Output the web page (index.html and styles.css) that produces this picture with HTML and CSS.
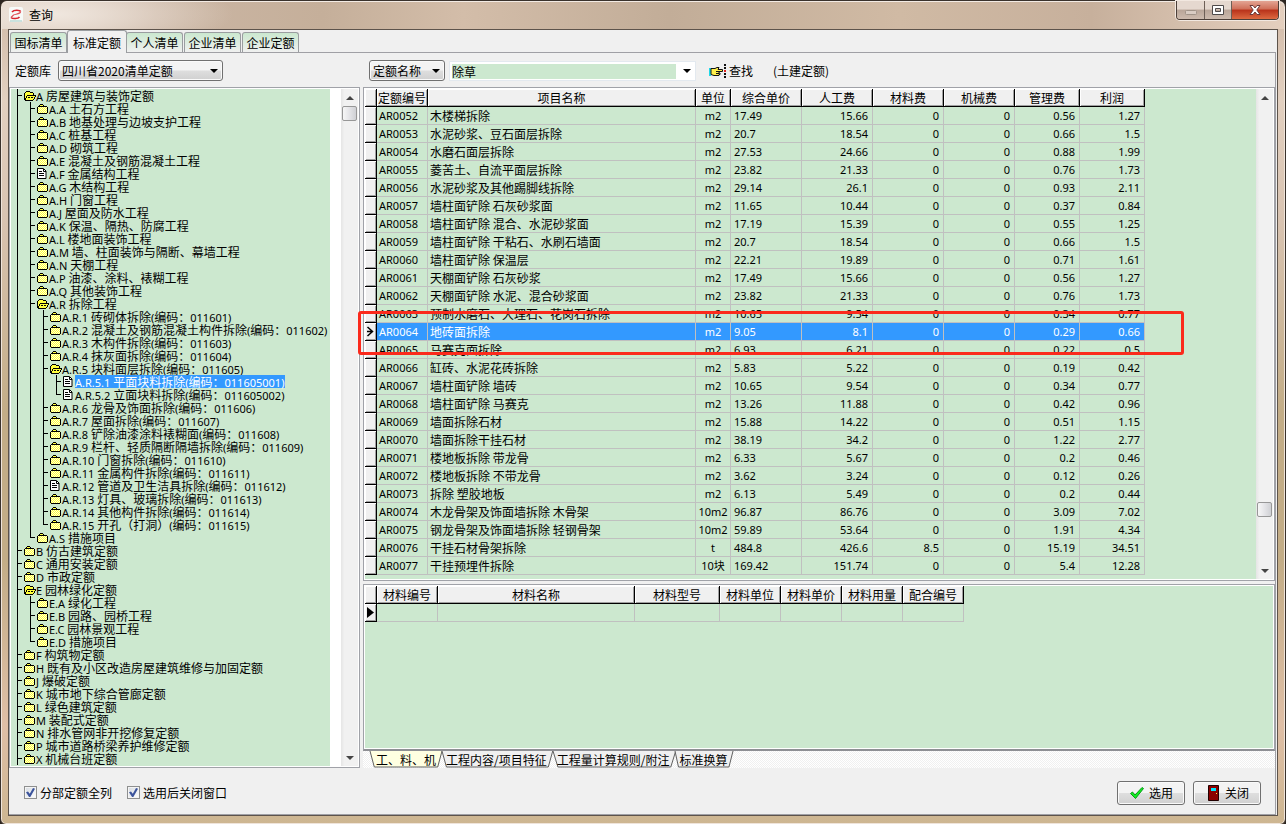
FILE: index.html
```html
<!DOCTYPE html>
<html lang="zh-CN">
<head>
<meta charset="utf-8">
<title>查询</title>
<link rel="stylesheet" href="styles.css">
</head>
<body>
<div class="window">
  <header class="titlebar">
    <svg class="app-icon" viewBox="0 0 16 16" aria-hidden="true">
      <rect x="1" y="0" width="14" height="15" rx="2" fill="#f7faf8"/>
      <path d="M2 14h12" stroke="#9fcac4"/>
      <path d="M4 5c2-2.500 8-2 8.500-.5M3 10.500c1.500 1.500 7 1.500 8.500-.5" fill="none" stroke="#d8232f" stroke-width="1.600"/>
      <path d="M12.500 4.500C13 7 8 7 5.500 8L3 10.500" fill="none" stroke="#e0525a" stroke-width="1.200"/>
    </svg>
    <h1 class="title">查询</h1>
    <div class="window-buttons">
      <button class="wb" type="button" aria-label="最小化"><svg viewBox="0 0 14 12"><rect x="1.500" y="6.500" width="11" height="4" rx="1" fill="#d9ccc3" stroke="#a09388"/></svg></button>
      <button class="wb wb-max" type="button" aria-label="最大化"><svg viewBox="0 0 14 12"><path d="M1.500 1.500h11v9h-11zM4.500 4.500v3h5v-3z" fill="#fff" fill-rule="evenodd" stroke="#4e4a4a"/></svg></button>
      <button class="wb wb-close" type="button" aria-label="关闭窗口"><svg viewBox="0 0 14 12"><path d="M2 1.500h3L7 4l2-2.500h3L8.800 6l3.200 4.500H9L7 8l-2 2.500H2L5.200 6z" fill="#fff" stroke="#6b3a3a"/></svg></button>
    </div>
  </header>

  <main class="client">
    <nav class="tabs">
      <button class="tab" type="button">国标清单</button>
      <button class="tab tab-active" type="button">标准定额</button>
      <button class="tab" type="button">个人清单</button>
      <button class="tab" type="button">企业清单</button>
      <button class="tab" type="button">企业定额</button>
    </nav>

    <div class="page">
      <div class="toolbar">
        <div class="tool-left">
          <label for="lib">定额库</label>
          <span class="combo combo-lib"><select id="lib"><option>四川省2020清单定额</option></select></span>
        </div>
        <div class="tool-right">
          <span class="combo combo-field"><select aria-label="查询字段"><option>定额名称</option></select></span>
          <span class="search"><input type="text" value="除草" aria-label="关键字"><button type="button" aria-label="历史"></button></span>
          <button class="find" type="button">
            <svg viewBox="0 0 20 14" aria-hidden="true">
              <path d="M0 4h2v8H0z" fill="#1fd8e8"/>
              <path d="M2 4.500h4l2-1h2l-1 2h4.500v2H10v1.500h1v1.500h-1v1H5l-3-1z" fill="#fff04a" stroke="#111"/>
              <path d="M7 7.500h3M7 9.500h3" stroke="#111"/>
              <path d="M15 0h2v2h-2zM15 3h2v2h-2zM15 9h2v2h-2zM15 12h2v2h-2z" fill="#111"/><path d="M15 6h2v2h-2z" fill="#e02020"/>
            </svg>查找</button>
          <span class="kind">(土建定额)</span>
        </div>
      </div>

      <div class="split">
        <section class="tree-panel">
          <ul class="tree" id="tree"></ul>
          <div class="scroll"><i class="up"></i><i class="thumb thumb-top"></i><i class="down"></i></div>
        </section>

        <div class="right">
          <section class="grid-panel">
            <div class="grid-area">
              <table class="grid">
                <colgroup><col class="w12"><col class="w51"><col class="w268"><col class="w35"><col class="w71"><col class="w71"><col class="w71"><col class="w71"><col class="w65"><col class="w65"></colgroup>
                <thead><tr><th></th><th>定额编号</th><th>项目名称</th><th>单位</th><th>综合单价</th><th>人工费</th><th>材料费</th><th>机械费</th><th>管理费</th><th>利润</th></tr></thead>
                <tbody id="rows"></tbody>
              </table>
            </div>
            <div class="scroll"><i class="up"></i><i class="thumb thumb-low"></i><i class="down"></i></div>
            <div class="callout"></div>
          </section>

          <section class="detail-panel">
            <table class="grid">
              <colgroup><col class="w12"><col class="w61"><col class="w197"><col class="w85"><col class="w61"><col class="w61"><col class="w61"><col class="w61"></colgroup>
              <thead><tr><th></th><th>材料编号</th><th>材料名称</th><th>材料型号</th><th>材料单位</th><th>材料单价</th><th>材料用量</th><th>配合编号</th></tr></thead>
              <tbody><tr><th><svg class="marker" viewBox="0 0 9 11"><path d="M1 0l7 5.500L1 11z"/></svg></th><td></td><td></td><td></td><td></td><td></td><td></td><td></td></tr></tbody>
            </table>
          </section>

          <nav class="sheet-tabs">
            <button class="sheet sheet-active" type="button"><svg viewBox="0 0 100 17" preserveAspectRatio="none"><path d="M0 0L6 16H94L100 0"/></svg><span>工、料、机</span></button>
            <button class="sheet" type="button"><svg viewBox="0 0 100 17" preserveAspectRatio="none"><path d="M0 0L4 16H96L100 0"/></svg><span>工程内容/项目特征</span></button>
            <button class="sheet" type="button"><svg viewBox="0 0 100 17" preserveAspectRatio="none"><path d="M0 0L4 16H96L100 0"/></svg><span>工程量计算规则/附注</span></button>
            <button class="sheet" type="button"><svg viewBox="0 0 100 17" preserveAspectRatio="none"><path d="M0 0L6 16H93L100 0"/></svg><span>标准换算</span></button>
          </nav>
        </div>
      </div>

      <footer class="footer">
        <label class="check"><input type="checkbox" checked>分部定额全列</label>
        <label class="check"><input type="checkbox" checked>选用后关闭窗口</label>
        <div class="actions">
          <button class="btn" type="button"><svg viewBox="0 0 16 16" aria-hidden="true"><path d="M1.500 8.500l2-1.500L6 10l7-7.500 1.500 1L6.500 13.500z" fill="#10ee20" stroke="#0a9a18"/></svg>选用</button>
          <button class="btn" type="button"><svg viewBox="0 0 16 16" aria-hidden="true"><path d="M3.500.500h10v15h-10z" fill="#8a0000" stroke="#200"/><path d="M6 3h5v3H6z" fill="#00e8ff"/><path d="M11 8h1v1h-1z" fill="#ffe34a"/></svg>关闭</button>
        </div>
      </footer>
    </div>
  </main>
</div>
<script src="app.js"></script>
</body>
</html>
```
FILE: styles.css
```css
* { box-sizing: border-box; }
body {
  margin: 0;
  font: 12px/13px "Noto Sans CJK SC", "Noto Sans", sans-serif;
  color: #000;
  background: #2c2520;
}
button, input, select { font: inherit; color: inherit; margin: 0; padding: 0; }
ul { margin: 0; padding: 0; list-style: none; }
.latin { font: 11px/13px "Noto Sans", sans-serif; }

.window {
  min-height: 100vh;
  display: flex;
  flex-direction: column;
  padding: 0 7px 8px;
  border: 1px solid #3a322c;
  border-radius: 7px 7px 6px 6px;
  box-shadow: inset 0 0 0 1px #efe4da;
  background: linear-gradient(#ceb9a6 0, #d5bfad 3%, #e2d0c0 12%, #d9c4b2 26%, #c3ad87 50%, #c3ad87 68%, #dfbfa6 88%, #cdb691 100%);
}
.titlebar {
  display: flex;
  align-items: flex-start;
  height: 28px;
  margin: 0 -6px;
  padding: 0 0 0 6px;
  border-radius: 6px 6px 0 0;
  background:
    radial-gradient(ellipse 180px 40px at 4% 45%, #f0e7df, #f0e7df00),
    linear-gradient(90deg, #dccbbd 0, #cbb6a4 12%, #c5af9a 25%, #d3bda9 36%, #c2ad98 52%, #d0baa4 70%, #c7b09c 85%, #e4cfbe 100%);
  border-top: 1px solid #f3ebe4;
}
.app-icon { width: 16px; height: 16px; margin-top: 5px; }
.title { margin: 5px 0 0 5px; font-size: 12px; line-height: 15px; font-weight: 400; }
.window-buttons {
  display: flex;
  margin: -1px 5px 0 auto;
  border: 1px solid #4c3f38;
  border-top: 0;
  border-radius: 0 0 4px 4px;
  overflow: hidden;
  box-shadow: 0 0 0 1px #f2e8e0;
}
.wb {
  width: 28px; height: 18px;
  display: grid; place-items: center;
  border: 0; border-right: 1px solid #6d5f56;
  background: linear-gradient(#e5d8cf 0 45%, #b9a598 50%, #cdbbae);
}
.wb svg { width: 14px; height: 12px; }
.wb-max { width: 27px; }
.wb-close { width: 46px; border-right: 0; background: linear-gradient(#e3a493 0, #cf6f58 45%, #b8321a 50%, #dd6a41); }

.client {
  flex: 1;
  display: flex;
  flex-direction: column;
  background: #f0f0f0;
  border: 1px solid #5d534b;
  padding: 0 1px 0 0;
}
.tabs { display: flex; align-items: flex-end; height: 22px; padding-left: 1px; }
.tab {
  height: 20px; width: 57px;
  margin-right: 1px;
  border: 1px solid #9a9da0; border-bottom: 0;
  border-radius: 3px 3px 0 0;
  background: linear-gradient(#cbe8cf, #f0f0f0);
  white-space: nowrap;
}
.tab-active {
  width: 60px; height: 23px;
  margin: 0 -1px -1px -1px;
  background: #f0f0f0;
  position: relative;
}
.page {
  flex: 1;
  display: flex;
  flex-direction: column;
  border: 1px solid #a0a0a5;
  border-width: 1px 1px 1px 0;
}
.toolbar { display: flex; height: 34px; align-items: center; }
.tool-left { display: flex; align-items: center; gap: 7px; width: 354px; padding: 1px 0 0 6px; }
.tool-right { display: flex; align-items: center; padding: 1px 0 0 6px; }
.combo { position: relative; display: flex; }
.combo select {
  appearance: none;
  width: 100%; height: 21px;
  padding: 0 3px;
  border: 1px solid #707070; border-radius: 3px;
  background: linear-gradient(#f3f3f3 0 48%, #dedede 52%, #d0d0d0);
  box-shadow: inset 0 0 0 1px #fafafa;
}
.combo::after, .search button::after {
  content: "";
  position: absolute;
  right: 5px; top: 9px;
  border: 4px solid transparent;
  border-top-color: #000; border-bottom: 0;
}
.combo-lib { width: 165px; }
.combo-field { width: 76px; }
.search {
  display: flex;
  width: 247px; height: 20px;
  margin-left: 4px;
  padding: 2px 0 2px 2px;
  background: #fff;
  border: 1px solid #e3e9ef;
}
.search input { flex: 1; min-width: 0; border: 0; background: #cce8cf; outline: 0; height: 15px; }
.search button { position: relative; width: 19px; border: 0; background: none; }
.search button::after { right: 4px; top: 5px; }
.find { display: flex; align-items: center; border: 0; background: none; margin-left: 13px; }
.find svg { width: 20px; height: 14px; }
.kind { margin-left: 20px; }

.split { display: flex; flex: 1; gap: 3px; }
.tree-panel, .grid-panel, .detail-panel {
  border: 1px solid #a0a2a8;
  box-shadow: inset 0 0 0 1px #fff;
  padding: 1px;
  display: flex;
}
.tree-panel { width: 351px; background: #fff; }
.tree { width: 319px; background: #cce8cf; padding-bottom: 1px; }
.tree li { display: flex; height: 13px; white-space: pre; }
.guide { width: 13px; flex: none; background: linear-gradient(#000, #000) 6px 0 / 1px 100% no-repeat; }
.guide-leaf {
  background:
    linear-gradient(#000, #000) 6px 0 / 1px 100% no-repeat,
    linear-gradient(#000, #000) 6px 6px / 5px 1px no-repeat;
}
.guide-last { background-size: 1px 7px, 5px 1px; }
.node-icon { width: 12px; height: 13px; flex: none; }
.node-text { padding-right: 1px; height: 13px; }
.node-selected { background: #39f; color: #fff; }

.scroll {
  display: flex;
  flex-direction: column;
  align-items: center;
  width: 17px;
  margin-left: auto;
  background: linear-gradient(90deg, #e5e5e5, #f1f1f1 20%, #f1f1f1);
}
.scroll i { flex: none; }
.up, .down { width: 0; height: 0; border: 4px solid transparent; }
.up { border-bottom-color: #444; border-top: 0; margin: 7px 0 6px; }
.down { border-top-color: #444; border-bottom: 0; margin: auto 0 6px; }
.thumb {
  width: 15px; height: 15px;
  border: 1px solid #979797; border-radius: 2px;
  background: linear-gradient(90deg, #f7f7f7, #e6e6e9 45%, #cfd0d4);
}
.thumb-low { margin-top: 396px; }

.right { flex: 1; min-width: 0; display: flex; flex-direction: column; }
.grid-panel { position: relative; background: #cce8cf; }
.grid-area { flex: 1; padding-bottom: 4px; }
.detail-panel { flex: 1; margin-top: 3px; background: #cce8cf; align-items: flex-start; border-bottom: 2px solid #8e8f94; }
.grid { table-layout: fixed; width: 0; border-collapse: separate; border-spacing: 0; }
.grid th, .grid td { height: 18px; padding: 0 2px; line-height: 17px; white-space: nowrap; overflow: hidden; }
.grid th {
  padding: 0;
  font-weight: 400;
  background: #f0f0f0;
  border-right: 1px solid #000;
  border-bottom: 1px solid #000;
  box-shadow: inset 1px 1px #fff, inset -1px -1px #a0a0a0;
}
.grid td { border-right: 1px solid #c0c0c0; border-bottom: 1px solid #c0c0c0; }
.grid .num { font: 11px/17px "Noto Sans", sans-serif; text-align: right; padding-right: 4px; }
.grid .code { font: 11px/17px "Noto Sans", sans-serif; }
.grid .price { font: 11px/17px "Noto Sans", sans-serif; padding-left: 3px; }
.grid .unit { font: 11px/17px "Noto Sans", "Noto Sans CJK SC", sans-serif; text-align: center; padding: 0; }
.grid .current td { background: #39f; color: #fff; }
.marker { display: block; width: 9px; height: 11px; margin: 0 auto; }
.w12 { width: 12px; } .w35 { width: 35px; } .w51 { width: 51px; } .w61 { width: 61px; }
.w65 { width: 65px; } .w71 { width: 71px; } .w85 { width: 85px; } .w197 { width: 197px; } .w268 { width: 268px; }
.callout {
  position: absolute;
  left: -6px; top: 223px;
  width: 826px; height: 44px;
  border: 3px solid #fb2a1c;
  border-radius: 3px;
  pointer-events: none;
}

.sheet-tabs {
  display: flex;
  height: 17px;
  padding-left: 7px;
  background: repeating-conic-gradient(#fff 0 25%, #f0f0f0 0 50%) 0 0 / 2px 2px;
}
.sheet { position: relative; border: 0; background: none; padding: 0 6px 0 4px; white-space: nowrap; }
.sheet span { position: relative; }
.sheet svg { position: absolute; inset: 0; width: 100%; height: 100%; overflow: visible; }
.sheet path { fill: #f0f0f0; stroke: #606060; vector-effect: non-scaling-stroke; }
.sheet-active { padding: 0 6px; }
.sheet-active path { fill: #ffffe1; }

.footer { display: flex; align-items: center; gap: 15px; height: 46px; padding: 3px 14px 0 15px; }
.check { display: flex; align-items: center; gap: 3px; }
.check input {
  appearance: none;
  width: 13px; height: 13px;
  border: 1px solid #8e8f8f;
  background: linear-gradient(135deg, #d5dae0, #fff);
  box-shadow: inset 0 0 0 1px #f4f4f4;
}
.check input:checked::after {
  content: "";
  display: block;
  width: 9px; height: 9px;
  margin: 1px;
  background: #3c549c;
  clip-path: polygon(0 48%, 22% 40%, 42% 65%, 78% 0, 100% 8%, 48% 100%, 34% 100%);
}
.actions { display: flex; gap: 8px; margin-left: auto; }
.btn {
  display: flex; align-items: center; justify-content: center; gap: 4px;
  width: 68px; height: 24px;
  border: 1px solid #707070; border-radius: 3px;
  background: linear-gradient(#f3f3f3 0 48%, #dedede 52%, #d0d0d0);
  box-shadow: inset 0 0 0 1px #fafafa;
}
.btn svg { width: 16px; height: 16px; }
```
FILE: app.js
```js
// Each entry: level, icon (f folder, o open folder, d document), label, optional "last" flag.
const nodes = [
  [0, "o", "A 房屋建筑与装饰定额"],
  [1, "f", "A.A 土石方工程"],
  [1, "f", "A.B 地基处理与边坡支护工程"],
  [1, "f", "A.C 桩基工程"],
  [1, "f", "A.D 砌筑工程"],
  [1, "f", "A.E 混凝土及钢筋混凝土工程"],
  [1, "d", "A.F 金属结构工程"],
  [1, "f", "A.G 木结构工程"],
  [1, "f", "A.H 门窗工程"],
  [1, "f", "A.J 屋面及防水工程"],
  [1, "f", "A.K 保温、隔热、防腐工程"],
  [1, "f", "A.L 楼地面装饰工程"],
  [1, "f", "A.M 墙、柱面装饰与隔断、幕墙工程"],
  [1, "f", "A.N 天棚工程"],
  [1, "f", "A.P 油漆、涂料、裱糊工程"],
  [1, "f", "A.Q 其他装饰工程"],
  [1, "o", "A.R 拆除工程"],
  [2, "f", "A.R.1 砖砌体拆除(编码：011601)"],
  [2, "f", "A.R.2 混凝土及钢筋混凝土构件拆除(编码：011602)"],
  [2, "f", "A.R.3 木构件拆除(编码：011603)"],
  [2, "f", "A.R.4 抹灰面拆除(编码：011604)"],
  [2, "o", "A.R.5 块料面层拆除(编码：011605)"],
  [3, "d", "A.R.5.1 平面块料拆除(编码：011605001)", "selected"],
  [3, "d", "A.R.5.2 立面块料拆除(编码：011605002)", "last"],
  [2, "f", "A.R.6 龙骨及饰面拆除(编码：011606)"],
  [2, "f", "A.R.7 屋面拆除(编码：011607)"],
  [2, "f", "A.R.8 铲除油漆涂料裱糊面(编码：011608)"],
  [2, "f", "A.R.9 栏杆、轻质隔断隔墙拆除(编码：011609)"],
  [2, "f", "A.R.10 门窗拆除(编码：011610)"],
  [2, "f", "A.R.11 金属构件拆除(编码：011611)"],
  [2, "d", "A.R.12 管道及卫生洁具拆除(编码：011612)"],
  [2, "f", "A.R.13 灯具、玻璃拆除(编码：011613)"],
  [2, "f", "A.R.14 其他构件拆除(编码：011614)"],
  [2, "f", "A.R.15 开孔（打洞）(编码：011615)", "last"],
  [1, "f", "A.S 措施项目", "last"],
  [0, "f", "B 仿古建筑定额"],
  [0, "f", "C 通用安装定额"],
  [0, "f", "D 市政定额"],
  [0, "o", "E 园林绿化定额"],
  [1, "f", "E.A 绿化工程"],
  [1, "f", "E.B 园路、园桥工程"],
  [1, "f", "E.C 园林景观工程"],
  [1, "f", "E.D 措施项目", "last"],
  [0, "f", "F 构筑物定额"],
  [0, "f", "H 既有及小区改造房屋建筑维修与加固定额"],
  [0, "f", "J 爆破定额"],
  [0, "f", "K 城市地下综合管廊定额"],
  [0, "f", "L 绿色建筑定额"],
  [0, "f", "M 装配式定额"],
  [0, "f", "N 排水管网非开挖修复定额"],
  [0, "f", "P 城市道路桥梁养护维修定额"],
  [0, "f", "X 机械台班定额"]
];

const icons = {
  f: '<path d="M.5 4.500H10.500V11.500H.5z" fill="#ffff3c"/><path d="M1 5.500h9M1 7.500h9M1 9.500h9" stroke="#fff" stroke-opacity=".8" stroke-dasharray="1 1"/><path d="M2 6.500h9M2 8.500h9M2 10.500h9" stroke="#fff" stroke-opacity=".8" stroke-dasharray="1 1"/><path d="M2 4V3H3V2H6V3H7V4" fill="#ffff3c"/><path d="M.5 5v6M1 11.500h9M10.500 5v6M1 4.500h1M7 4.500h3M2.500 3v1M3 2.500h3M6.500 3v1M2 4.500h5" fill="none" stroke="#000"/>',
  o: '<path d="M.5 10V4.500l2-2h3l1 1.500h2.500v2.500h2.500l-2 5H1.500z" fill="#ffff3c"/><path d="M.5 4v7M1 3.500h1M2 2.500h4M6 3.500h3M9.500 4v2M3 6.500h9M2.500 7v2M1.500 9v2M1 11.500h8M9.500 10v1M10.500 8v2M11.500 6v2M4 8.500h2M7 8.500h2" fill="none" stroke="#000"/>',
  d: '<path d="M.5 1.500h6l2.500 2.500v7.500H.5z" fill="#fff" stroke="#000"/><path d="M2 4.500h3M2 6.500h5M2 8.500h5M6.500 2v2.500H9" fill="none" stroke="#000"/>'
};

document.getElementById("tree").innerHTML = nodes.map(([level, icon, label, flag]) => {
  const text = label.replace(/[ -~]+/g, '<span class="latin">$&</span>');
  return "<li>" + '<i class="guide"></i>'.repeat(level) +
    `<i class="guide guide-leaf${flag === "last" ? " guide-last" : ""}"></i>` +
    `<svg class="node-icon" viewBox="0 0 12 13">${icons[icon]}</svg>` +
    `<span class="node-text${flag === "selected" ? " node-selected" : ""}">${text}</span></li>`;
}).join("");

// code | name | unit | price | labour | material | machine | overhead | profit
const rows = `AR0052|木楼梯拆除|m2|17.49|15.66|0|0|0.56|1.27
AR0053|水泥砂浆、豆石面层拆除|m2|20.7|18.54|0|0|0.66|1.5
AR0054|水磨石面层拆除|m2|27.53|24.66|0|0|0.88|1.99
AR0055|菱苦土、自流平面层拆除|m2|23.82|21.33|0|0|0.76|1.73
AR0056|水泥砂浆及其他踢脚线拆除|m2|29.14|26.1|0|0|0.93|2.11
AR0057|墙柱面铲除 石灰砂浆面|m2|11.65|10.44|0|0|0.37|0.84
AR0058|墙柱面铲除 混合、水泥砂浆面|m2|17.19|15.39|0|0|0.55|1.25
AR0059|墙柱面铲除 干粘石、水刷石墙面|m2|20.7|18.54|0|0|0.66|1.5
AR0060|墙柱面铲除 保温层|m2|22.21|19.89|0|0|0.71|1.61
AR0061|天棚面铲除 石灰砂浆|m2|17.49|15.66|0|0|0.56|1.27
AR0062|天棚面铲除 水泥、混合砂浆面|m2|23.82|21.33|0|0|0.76|1.73
AR0063|预制水磨石、大理石、花岗石拆除|m2|10.65|9.54|0|0|0.34|0.77
AR0064|地砖面拆除|m2|9.05|8.1|0|0|0.29|0.66
AR0065|马赛克面拆除|m2|6.93|6.21|0|0|0.22|0.5
AR0066|缸砖、水泥花砖拆除|m2|5.83|5.22|0|0|0.19|0.42
AR0067|墙柱面铲除 墙砖|m2|10.65|9.54|0|0|0.34|0.77
AR0068|墙柱面铲除 马赛克|m2|13.26|11.88|0|0|0.42|0.96
AR0069|墙面拆除石材|m2|15.88|14.22|0|0|0.51|1.15
AR0070|墙面拆除干挂石材|m2|38.19|34.2|0|0|1.22|2.77
AR0071|楼地板拆除 带龙骨|m2|6.33|5.67|0|0|0.2|0.46
AR0072|楼地板拆除 不带龙骨|m2|3.62|3.24|0|0|0.12|0.26
AR0073|拆除 塑胶地板|m2|6.13|5.49|0|0|0.2|0.44
AR0074|木龙骨架及饰面墙拆除 木骨架|10m2|96.87|86.76|0|0|3.09|7.02
AR0075|钢龙骨架及饰面墙拆除 轻钢骨架|10m2|59.89|53.64|0|0|1.91|4.34
AR0076|干挂石材骨架拆除|t|484.8|426.6|8.5|0|15.19|34.51
AR0077|干挂预埋件拆除|10块|169.42|151.74|0|0|5.4|12.28`.split("\n");

const cellClass = ["code", "name", "unit", "price", "num", "num", "num", "num", "num"];
const pointer = '<svg class="marker" viewBox="0 0 9 11"><path d="M1.500 1l5 4.500-5 4.500M1 5.500h5" fill="none" stroke="#000" stroke-width="1.500"/></svg>';

document.getElementById("rows").innerHTML = rows.map(line => {
  const cells = line.split("|");
  const current = cells[0] === "AR0064";
  return `<tr${current ? ' class="current"' : ""}><th>${current ? pointer : ""}</th>` +
    cells.map((c, i) => `<td class="${cellClass[i]}">${c}</td>`).join("") + "</tr>";
}).join("");
```
